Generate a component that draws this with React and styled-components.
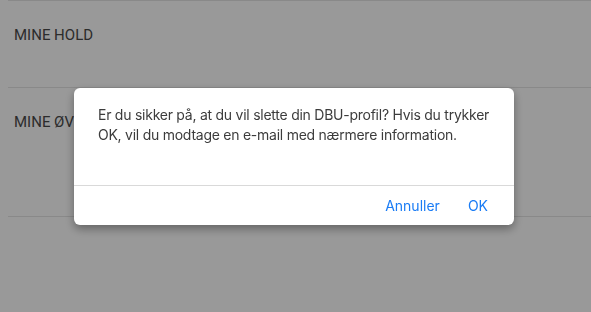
import React from "react";
import styled, { createGlobalStyle } from "styled-components";

const GlobalStyle = createGlobalStyle`
  html, body {
    margin: 0;
    padding: 0;
    background: #ffffff;
    font-family: Inter, "Noto Sans", sans-serif;
  }
`;

const Page = styled.div`
  width: 591px;
  height: 312px;
  padding-left: 8px;
  box-sizing: border-box;
  overflow: hidden;
`;

const List = styled.ul`
  list-style: none;
  margin: 0;
  padding: 0;
  border-top: 1px solid #e4e4e4;
`;

const Item = styled.li`
  height: ${(props) => props.$height}px;
  box-sizing: border-box;
  padding: 25px 6px 0;
  border-bottom: 1px solid #e4e4e4;
  font-family: Roboto, "Noto Sans", sans-serif;
  font-size: 15px;
  color: #4a4a4a;
  line-height: 18px;
`;

const Overlay = styled.div`
  position: fixed;
  inset: 0;
  background: rgba(0, 0, 0, 0.4);
  display: flex;
  align-items: center;
  justify-content: center;
  padding-right: 3px;
`;

const Dialog = styled.div`
  width: 440px;
  background: #ffffff;
  border-radius: 6px;
  box-shadow: 0 4px 10px rgba(0, 0, 0, 0.35);
  overflow: hidden;
`;

const Message = styled.p`
  margin: 0;
  padding: 17px 16px 40px 24px;
  font-size: 14px;
  line-height: 20px;
  letter-spacing: -0.25px;
  color: #3c3c3c;
`;

const Footer = styled.div`
  height: 39px;
  border-top: 1px solid #d9d9d9;
  display: flex;
  align-items: center;
  justify-content: flex-end;
  gap: 28px;
  padding-right: 26px;
`;

const Action = styled.button`
  border: none;
  background: none;
  padding: 0;
  font-family: inherit;
  font-size: 14px;
  color: #1a7cf5;
  cursor: pointer;
`;

export default function App() {
  return (
    <>
      <GlobalStyle />
      <Page>
        <List>
          <Item $height={87}>MINE HOLD</Item>
          <Item $height={129}>MINE ØVELSER</Item>
        </List>
      </Page>
      <Overlay>
        <Dialog>
          <Message>
            Er du sikker på, at du vil slette din DBU-profil? Hvis du trykker
            OK, vil du modtage en e-mail med nærmere information.
          </Message>
          <Footer>
            <Action>Annuller</Action>
            <Action>OK</Action>
          </Footer>
        </Dialog>
      </Overlay>
    </>
  );
}
